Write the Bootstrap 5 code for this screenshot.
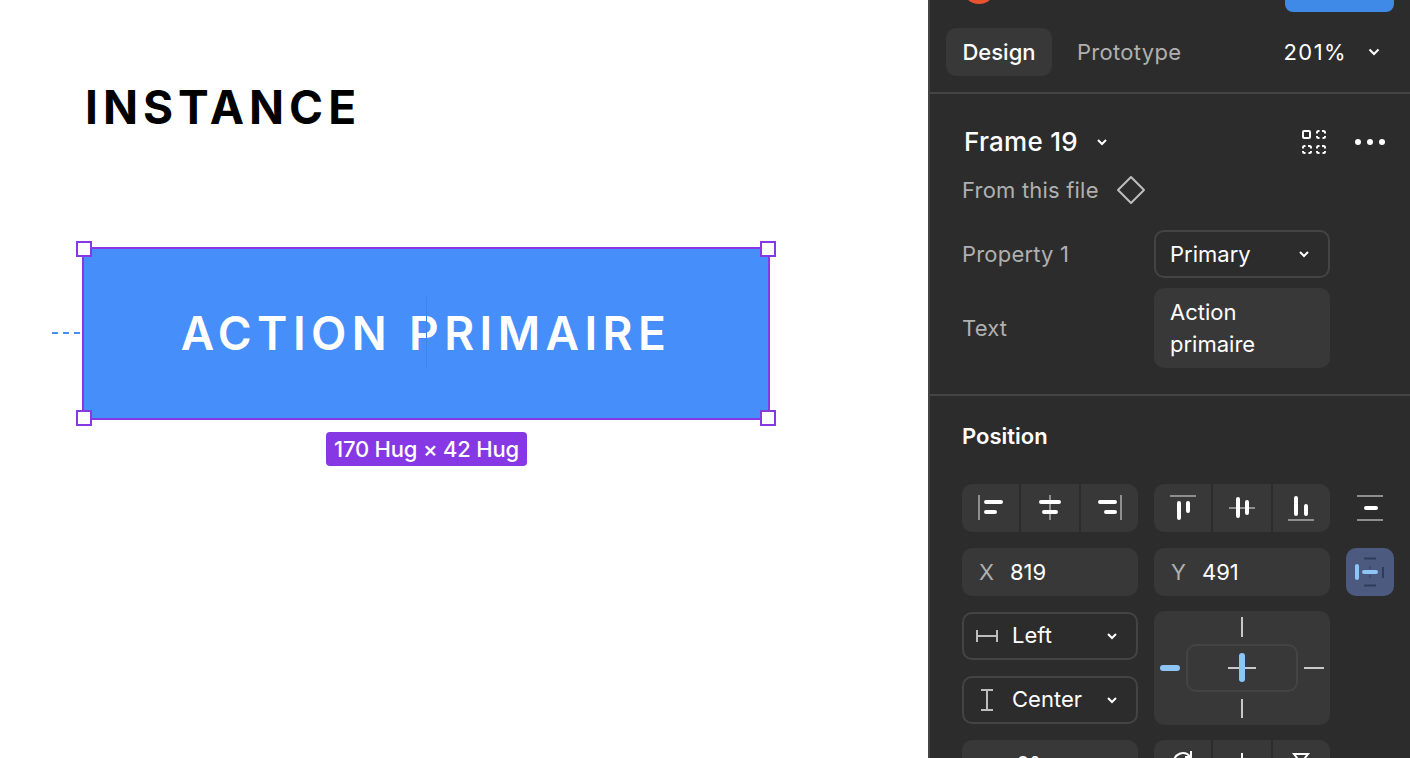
<!DOCTYPE html>
<html>
<head>
  <title>Instance - Design panel</title>
  <link href="https://cdn.jsdelivr.net/npm/bootstrap@5.3.0/dist/css/bootstrap.min.css" rel="stylesheet">
  <style>
    html, body { height: 100%; overflow: hidden; }
    body { background: #fff; font-family: Inter, "Liberation Sans", sans-serif; }
    /* canvas side */
    .canvas-area { position: relative; width: 928px; height: 758px; flex: none; background: #fff; }
    .canvas-title { position: absolute; left: 85px; top: 78px; margin: 0; font-size: 46px; line-height: 58px; font-weight: 700; letter-spacing: 5px; color: #000; }
    .frame-box { position: absolute; left: 82px; top: 247px; width: 688px; height: 173px; background: #468ef9; border: 2px solid #8638e5; color: #fff; font-size: 46px; font-weight: 600; letter-spacing: 5.4px; }
    .center-guide { position: absolute; left: 342px; top: 48px; width: 1px; height: 72px; background: #3e84ec; }
    .sel-handle { position: absolute; width: 16px; height: 16px; background: #fff; border: 2px solid #8638e5; }
    .h-tl { left: 76px; top: 241px; }
    .h-tr { left: 760px; top: 241px; }
    .h-bl { left: 76px; top: 410px; }
    .h-br { left: 760px; top: 410px; }
    .spacing-guide { position: absolute; left: 52px; top: 332px; width: 28px; border-top: 2px dashed #468ef9; }
    .size-tag { position: absolute; left: 326px; top: 432px; height: 34px; padding: 0 8px; background: #8638e5; color: #fff; border-radius: 4px; font-size: 22px; line-height: 34px; font-weight: 500; letter-spacing: -.2px; white-space: nowrap; }

    /* right panel */
    .side-panel { width: 482px; height: 758px; flex: none; background: #2c2c2c; border-left: 2px solid #444; color: #fff; overflow: hidden; font-size: 22px; }
    .top-strip { height: 28px; position: relative; }
    .avatar-dot { position: absolute; left: 32px; top: -30px; width: 34px; height: 34px; border-radius: 50%; background: #e8532f; }
    .share-btn { position: absolute; left: 355px; top: -20px; width: 109px; height: 32px; border-radius: 8px; background: #3f8ae6; }
    .tab-row { height: 48px; padding: 0 30px 0 16px; }
    .tab-pill { width: 106px; height: 48px; border-radius: 10px; background: #383838; font-weight: 500; }
    .tab-off { margin-left: 25px; color: #b0b0b0; letter-spacing: .3px; }
    .zoom-val { letter-spacing: 1.4px; margin-right: 21px; }
    .panel-line { height: 2px; background: #444; }
    .line-tabs { margin-top: 16px; }
    .line-props { margin-top: 26px; }
    .frame-sec { padding: 30px 24px 0 32px; }
    .frame-name { font-size: 26px; line-height: 36px; font-weight: 500; margin-left: 2px; letter-spacing: .25px; }
    .frame-chev { margin-left: 19px; }
    .comp-ico { margin-left: auto; }
    .more-ico { margin-left: 28px; }
    .muted-txt { color: #b0b0b0; letter-spacing: .2px; }
    .from-row { height: 36px; margin-top: 12px; }
    .file-ico { margin-left: 17px; }
    .prop-grid { display: grid; grid-template-columns: 192px 176px; margin-top: 22px; row-gap: 10px; align-items: center; }
    .select-box { height: 48px; border: 2px solid #444; border-radius: 10px; padding: 0 19px 0 14px; line-height: 1; }
    .size-select { padding-left: 12px; }
    .size-select span { padding-bottom: 2px; }
    .value-box { background: #383838; border-radius: 10px; padding: 8px 16px; line-height: 32px; }
    .pos-sec { padding: 22px 16px 0 32px; }
    .pos-title { font-weight: 600; line-height: 36px; }
    .pos-grid { display: grid; grid-template-columns: 176px 176px 48px; column-gap: 16px; row-gap: 16px; margin-top: 30px; }
    .btn-trio { display: flex; gap: 2px; }
    .btn-trio > div { flex: 1; height: 48px; background: #383838; display: flex; align-items: center; justify-content: center; }
    .btn-trio > div:first-child { border-radius: 10px 0 0 10px; }
    .btn-trio > div:last-child { border-radius: 0 10px 10px 0; }
    .plain-ico { height: 48px; }
    .num-box { height: 48px; background: #383838; border-radius: 10px; padding-left: 17px; }
    .num-lbl { color: #b0b0b0; width: 31px; }
    .angle-ico { margin-left: -1px; margin-right: 16px; flex: none; }
    .blue-toggle { height: 48px; background: #4c5a7f; border-radius: 10px; }
    .size-stack { display: flex; flex-direction: column; gap: 16px; }
    .sz-ico { width: 22px; margin-right: 14px; flex: none; }
    .constraint-box { position: relative; height: 114px; margin: -1px 0; background: #383838; border-radius: 10px; }
    .constraint-inner { position: absolute; left: 32px; top: 33px; width: 112px; height: 48px; border: 2px solid #444; border-radius: 10px; }
    .constraint-box svg { position: absolute; left: 0; top: 0; }
  </style>
</head>
<body class="d-flex">
  <!-- Canvas -->
  <div class="canvas-area">
    <h1 class="canvas-title">INSTANCE</h1>
    <div class="spacing-guide"></div>
    <div class="frame-box d-flex align-items-center justify-content-center">
      <span>ACTION PRIMAIRE</span>
      <div class="center-guide"></div>
    </div>
    <div class="sel-handle h-tl"></div>
    <div class="sel-handle h-tr"></div>
    <div class="sel-handle h-bl"></div>
    <div class="sel-handle h-br"></div>
    <div class="size-tag">170 Hug × 42 Hug</div>
  </div>

  <!-- Right panel -->
  <div class="side-panel">
    <div class="top-strip">
      <div class="avatar-dot"></div>
      <div class="share-btn"></div>
    </div>
    <div class="tab-row d-flex align-items-center">
      <div class="tab-pill d-flex align-items-center justify-content-center">Design</div>
      <div class="tab-off">Prototype</div>
      <div class="zoom-val ms-auto">201%</div>
      <svg width="12" height="8" viewBox="0 0 12 8" fill="none" stroke="#fff" stroke-width="2"><path d="M1.500 1.500l4.500 4.500 4.500-4.500"/></svg>
    </div>
    <div class="panel-line line-tabs"></div>

    <div class="frame-sec">
      <div class="d-flex align-items-center">
        <div class="frame-name">Frame 19</div>
        <svg class="frame-chev" width="10" height="7" viewBox="0 0 10 7" fill="none" stroke="#fff" stroke-width="2"><path d="M1 1l4 4 4-4"/></svg>
        <svg class="comp-ico" width="24" height="24" viewBox="0 0 24 24" fill="none" stroke="#fff" stroke-width="2">
          <rect x="1" y="1" width="7" height="7" rx="1"/>
          <path id="dashedCell" d="M15 3.500v-1a1.500 1.500 0 0 1 1.500-1.500h1M20 1h1.500a1.500 1.500 0 0 1 1.500 1.500v1M23 6v.5a1.500 1.500 0 0 1-1.500 1.500h-1M17.500 8h-1a1.500 1.500 0 0 1-1.500-1.500v-.5"/>
          <use href="#dashedCell" transform="translate(-14 15)"/>
          <use href="#dashedCell" transform="translate(0 15)"/>
        </svg>
        <svg class="more-ico" width="32" height="8" viewBox="0 0 32 8" fill="#fff"><circle cx="4" cy="4" r="3"/><circle cx="16" cy="4" r="3"/><circle cx="28" cy="4" r="3"/></svg>
      </div>
      <div class="from-row d-flex align-items-center">
        <span class="muted-txt">From this file</span>
        <svg class="file-ico" width="30" height="30" viewBox="0 0 30 30" fill="none" stroke="#bdbdbd" stroke-width="2"><path d="M15 2l13 13-13 13L2 15z" stroke-linejoin="round"/></svg>
      </div>
      <div class="prop-grid">
        <div class="muted-txt">Property 1</div>
        <div class="select-box d-flex align-items-center justify-content-between">
          <span>Primary</span>
          <svg width="10" height="7" viewBox="0 0 10 7" fill="none" stroke="#fff" stroke-width="2"><path d="M1 1l4 4 4-4"/></svg>
        </div>
        <div class="muted-txt">Text</div>
        <div class="value-box">Action<br>primaire</div>
      </div>
    </div>
    <div class="panel-line line-props"></div>

    <div class="pos-sec">
      <div class="pos-title">Position</div>
      <div class="pos-grid">
        <!-- alignment buttons -->
        <div class="btn-trio">
          <div><svg width="28" height="28" viewBox="0 0 28 28" fill="none"><path d="M2 1v25" stroke="#8f8f8f" stroke-width="2"/><path d="M9 8h15M9 18h9" stroke="#fff" stroke-width="4" stroke-linecap="round"/></svg></div>
          <div><svg width="28" height="28" viewBox="0 0 28 28" fill="none"><path d="M14 1v25" stroke="#8f8f8f" stroke-width="2"/><path d="M5 8h18M8 18h12" stroke="#fff" stroke-width="4" stroke-linecap="round"/></svg></div>
          <div><svg width="28" height="28" viewBox="0 0 28 28" fill="none"><path d="M26 1v25" stroke="#8f8f8f" stroke-width="2"/><path d="M5 8h15M11 18h9" stroke="#fff" stroke-width="4" stroke-linecap="round"/></svg></div>
        </div>
        <div class="btn-trio">
          <div><svg width="28" height="28" viewBox="0 0 28 28" fill="none"><path d="M1 2h26" stroke="#8f8f8f" stroke-width="2"/><path d="M10 9v15M19 9v8" stroke="#fff" stroke-width="4" stroke-linecap="round"/></svg></div>
          <div><svg width="28" height="28" viewBox="0 0 28 28" fill="none"><path d="M1 14h26" stroke="#8f8f8f" stroke-width="2"/><path d="M10 5v17M19 8v11" stroke="#fff" stroke-width="4" stroke-linecap="round"/></svg></div>
          <div><svg width="28" height="28" viewBox="0 0 28 28" fill="none"><path d="M1 26h26" stroke="#8f8f8f" stroke-width="2"/><path d="M9 4v16M19 12v8" stroke="#fff" stroke-width="4" stroke-linecap="round"/></svg></div>
        </div>
        <div class="plain-ico d-flex align-items-center justify-content-center">
          <svg width="28" height="28" viewBox="0 0 28 28" fill="none"><path d="M1 2h26M1 26h26" stroke="#8f8f8f" stroke-width="2"/><path d="M10 14h10" stroke="#fff" stroke-width="4" stroke-linecap="round"/></svg>
        </div>

        <!-- X Y -->
        <div class="num-box d-flex align-items-center"><span class="num-lbl">X</span><span>819</span></div>
        <div class="num-box d-flex align-items-center"><span class="num-lbl">Y</span><span>491</span></div>
        <div class="blue-toggle d-flex align-items-center justify-content-center">
          <svg width="32" height="30" viewBox="0 0 32 30" fill="none">
            <path d="M10 1.500h12M10 28.500h12M29 10v11" stroke="#2f3d5c" stroke-width="2"/>
            <path d="M3 9v12" stroke="#8fc4f7" stroke-width="4" stroke-linecap="round"/>
            <path d="M10 15h12" stroke="#8fc4f7" stroke-width="4" stroke-linecap="round"/>
            <path d="M16 9v3M16 18v3" stroke="#3a4868" stroke-width="1.500"/>
          </svg>
        </div>

        <!-- sizing and constraints -->
        <div class="size-stack">
          <div class="select-box size-select d-flex align-items-center">
            <svg class="sz-ico" height="12" viewBox="0 0 22 12" fill="none" stroke="#bdbdbd" stroke-width="2"><path d="M1 0v12M21 0v12M1 6h20"/></svg>
            <span>Left</span>
            <svg class="ms-auto" width="10" height="7" viewBox="0 0 10 7" fill="none" stroke="#fff" stroke-width="2"><path d="M1 1l4 4 4-4"/></svg>
          </div>
          <div class="select-box size-select d-flex align-items-center">
            <svg class="sz-ico" height="22" viewBox="0 0 22 22" fill="none" stroke="#bdbdbd" stroke-width="2"><path d="M5 1h12M5 21h12M11 1v20"/></svg>
            <span>Center</span>
            <svg class="ms-auto" width="10" height="7" viewBox="0 0 10 7" fill="none" stroke="#fff" stroke-width="2"><path d="M1 1l4 4 4-4"/></svg>
          </div>
        </div>
        <div class="constraint-box">
          <div class="constraint-inner"></div>
          <svg width="176" height="114" viewBox="0 0 176 114" fill="none">
            <path d="M88 6v20M88 88v19M150 57h20M74 57h28" stroke="#c9c9c9" stroke-width="2"/>
            <path d="M9 57h14" stroke="#8fc4f7" stroke-width="6" stroke-linecap="round"/>
            <path d="M88 45v23" stroke="#8fc4f7" stroke-width="6" stroke-linecap="round"/>
          </svg>
        </div>
        <div></div>

        <!-- row clipped by the window -->
        <div class="num-box d-flex align-items-center">
          <svg class="angle-ico" width="22" height="22" viewBox="0 0 22 22" fill="none" stroke="#bdbdbd" stroke-width="2"><path d="M3 16v-8M3 20h16"/></svg>
          <span>0°</span>
        </div>
        <div class="btn-trio">
          <div><svg width="28" height="28" viewBox="0 0 28 28" fill="none" stroke="#fff" stroke-width="2"><path d="M5 13a9 9 0 0 1 16-6.500M22 1v6h-6"/></svg></div>
          <div><svg width="28" height="28" viewBox="0 0 28 28" fill="none" stroke="#fff" stroke-width="2"><path d="M14 3v22M4 10l5 4-5 4M24 10l-5 4 5 4"/></svg></div>
          <div><svg width="28" height="28" viewBox="0 0 28 28" fill="none" stroke="#fff" stroke-width="2"><path d="M7 4h14l-7 9zM2 14h24"/></svg></div>
        </div>
      </div>
    </div>
  </div>
</body>
</html>
